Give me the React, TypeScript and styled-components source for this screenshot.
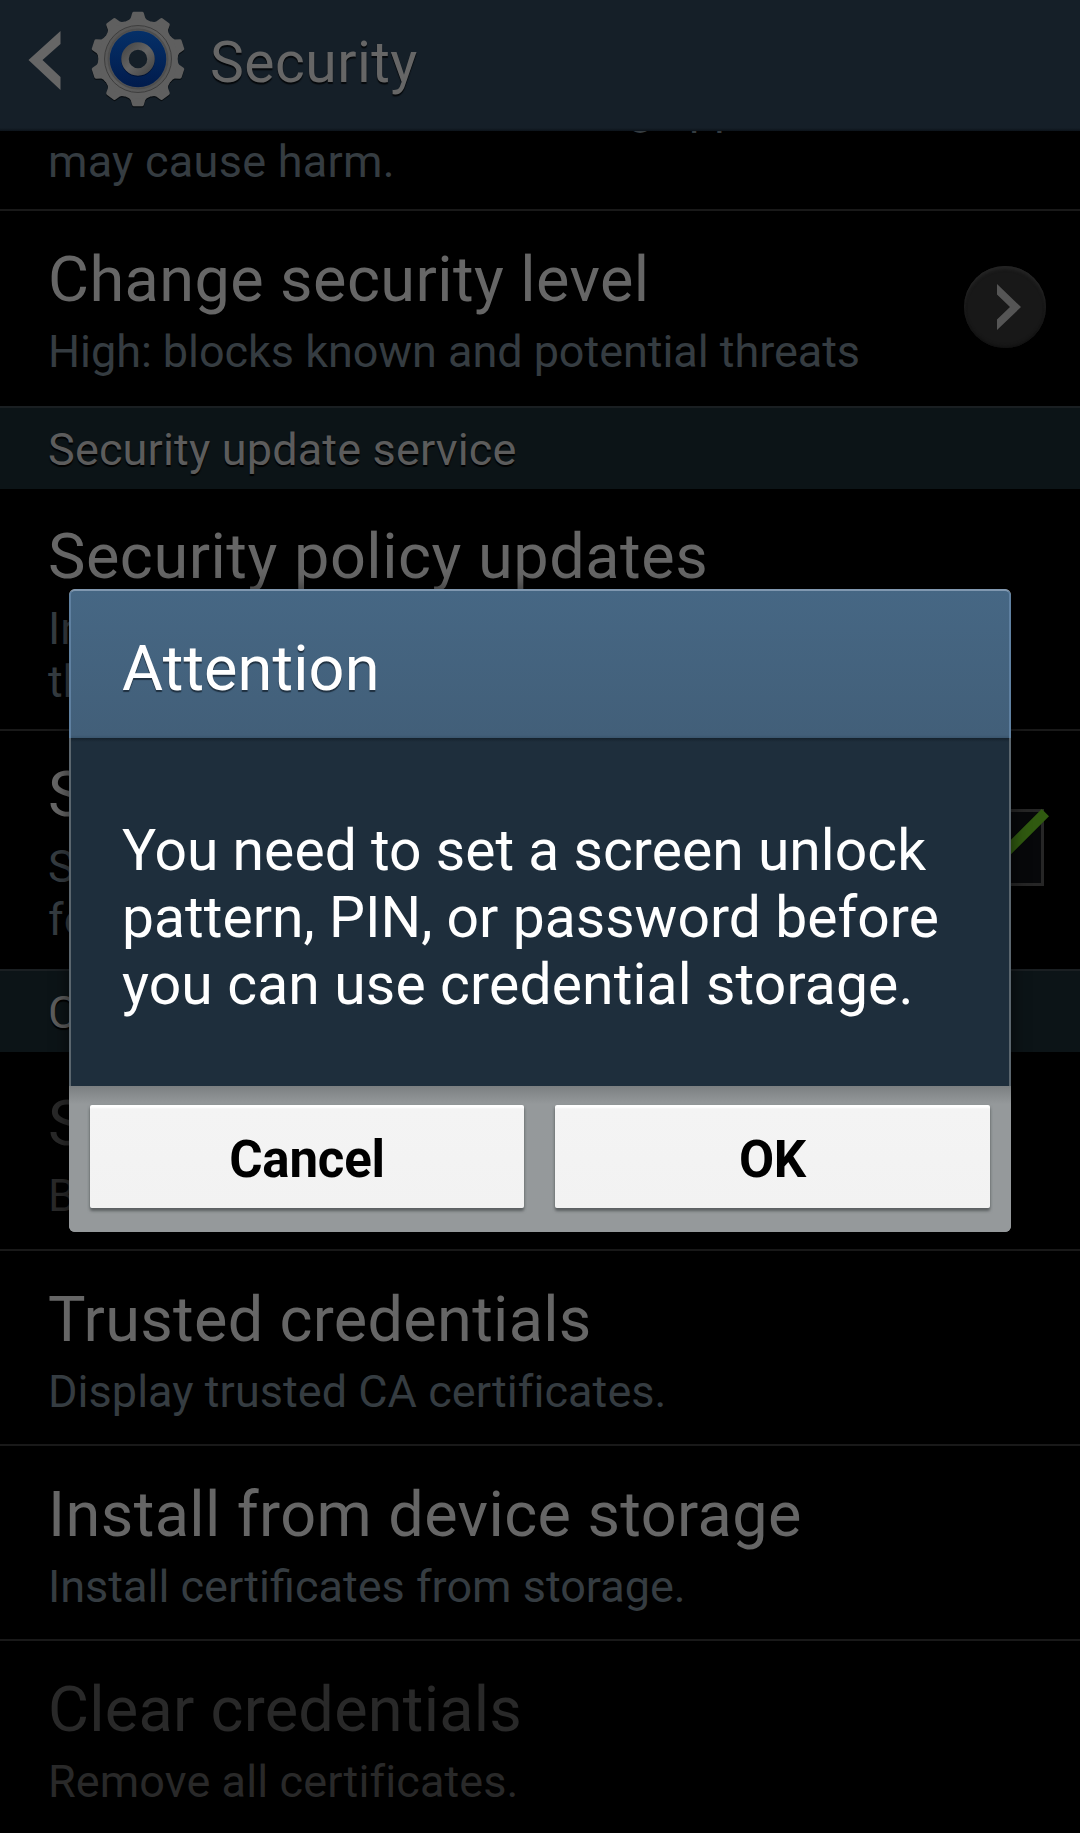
import React from "react";
import styled, { createGlobalStyle } from "styled-components";

const Global = createGlobalStyle`
  body { margin: 0; background: #000; font-family: Roboto, "Noto Sans", sans-serif; }
`;

const Screen = styled.div`
  position: relative;
  display: flex;
  flex-direction: column;
  width: 1080px;
  height: 1833px;
  overflow: hidden;
  background: #000;
`;

const ActionBar = styled.header`
  display: flex;
  align-items: center;
  box-sizing: border-box;
  height: 131px;
  flex: none;
  padding: 0 0 13px 28px;
  background: linear-gradient(#151f28 0 128px, #0c131a 131px);
`;

const BackIcon = styled.svg`
  width: 34px;
  height: 64px;
  flex: none;
  margin-top: 3px;
`;

const GearIcon = styled.svg`
  width: 100px;
  height: 100px;
  flex: none;
  margin-left: 26px;
`;

const BarTitle = styled.h1`
  margin: 7px 0 0 22px;
  font-size: 57px;
  font-weight: 400;
  line-height: 66px;
  letter-spacing: 0.45px;
  color: #666;
  text-shadow: 0 2px 1px #05080b;
`;

const List = styled.main`
  display: flex;
  flex-direction: column;
`;

const Clipped = styled.div`
  display: flex;
  flex-direction: column;
  justify-content: flex-end;
  box-sizing: border-box;
  height: 80px;
  overflow: hidden;
  padding: 0 48px 21px;
  border-bottom: 2px solid #191919;
`;

const Row = styled.div<{ $h: number; $top: number; $line?: boolean }>`
  display: flex;
  justify-content: space-between;
  box-sizing: border-box;
  height: ${(p) => p.$h}px;
  padding: ${(p) => p.$top}px 31px 0 48px;
  border-bottom: ${(p) => (p.$line === false ? "0" : "2px solid #191919")};
`;

const Labels = styled.div`
  display: flex;
  flex-direction: column;
  gap: 8px;
`;

const Title = styled.div<{ $off?: boolean; $track?: number }>`
  font-size: 63px;
  line-height: 75px;
  letter-spacing: ${(p) => p.$track ?? 0.4}px;
  white-space: nowrap;
  color: ${(p) => (p.$off ? "#292929" : "#666")};
`;

const Summary = styled.div<{ $off?: boolean; $track?: number }>`
  font-size: 45px;
  line-height: 53px;
  letter-spacing: ${(p) => p.$track ?? 0}px;
  font-variant-ligatures: common-ligatures;
  white-space: pre;
  color: ${(p) => (p.$off ? "#292929" : "#353c41")};
`;

const Section = styled.div`
  box-sizing: border-box;
  height: 83px;
  padding: 15px 48px 0;
  font-size: 45px;
  line-height: 53px;
  letter-spacing: 0.16px;
  color: #5c5c5c;
  background: #0c1417;
  border-top: 2px solid #1a1f22;
  text-shadow: 0 2px 1px #000;
`;

const Disc = styled.div`
  display: flex;
  align-items: center;
  justify-content: center;
  box-sizing: border-box;
  width: 82px;
  height: 82px;
  margin: 24px 3px 0 0;
  padding-left: 8px;
  border-radius: 50%;
  background: #181818;
  box-shadow: inset 0 3px 3px #242424, inset 0 -2px 3px #121212;
`;

const CheckIcon = styled.svg`
  width: 90px;
  height: 90px;
  margin-top: 43px;
`;

const Overlay = styled.div`
  position: absolute;
  inset: 0;
  display: flex;
  align-items: flex-start;
  justify-content: center;
  padding-top: 589px;
`;

const Dialog = styled.section`
  display: flex;
  flex-direction: column;
  width: 942px;
  height: 643px;
  border-radius: 6px;
  overflow: hidden;
  background: #95999b;
  box-shadow: 0 0 18px rgba(0, 0, 0, 0.6);
`;

const DialogHead = styled.div`
  box-sizing: border-box;
  height: 149px;
  padding: 40px 51px 0;
  font-size: 63px;
  line-height: 75px;
  letter-spacing: 0.1px;
  color: #fff;
  background: linear-gradient(#466784, #425f79 144px, #3a556d);
  border: 2px solid #5f80a0;
  border-top-color: #8098b0;
  border-bottom: 0;
  border-radius: 6px 6px 0 0;
  text-shadow: 0 2px 1px #1f3040;
`;

const DialogBody = styled.div`
  box-sizing: border-box;
  height: 348px;
  padding: 79px 51px 0;
  color: #fff;
  background: linear-gradient(#15222d, #1e2e3c 4px);
  border: solid #5b666e;
  border-width: 0 2px;
`;

const Line = styled.div<{ $track?: number }>`
  font-size: 57px;
  line-height: 67px;
  letter-spacing: ${(p) => p.$track ?? 0.03}px;
  white-space: nowrap;
`;

const Buttons = styled.div`
  display: grid;
  grid-template-columns: 434px 435px;
  gap: 31px;
  flex: 1;
  padding: 19px 21px 24px;
  background: linear-gradient(#7b7f81, #95999b 18px);
`;

const Button = styled.button`
  margin: 0;
  padding: 6px 0 0;
  border: 0;
  border-radius: 2px;
  font: 700 51px/60px Roboto, "Noto Sans", sans-serif;
  letter-spacing: -0.2px;
  color: #000;
  background: linear-gradient(#fff 0 2px, #f4f4f4 4px, #f2f2f2);
  box-shadow: 0 3px 3px #5c6062, 0 1px 3px #7c8082;
`;

function Gear() {
  const teeth = Array.from({ length: 10 }, (_, i) => i * 36);
  return (
    <GearIcon viewBox="-50 -50 100 100">
      <defs>
        <linearGradient id="blue" x1="0" y1="0" x2="0" y2="1">
          <stop offset="0" stopColor="#053068" />
          <stop offset="1" stopColor="#011b4c" />
        </linearGradient>
        <linearGradient id="ring" x1="0" y1="0" x2="1" y2="1">
          <stop offset="0" stopColor="#484848" />
          <stop offset="0.5" stopColor="#646464" />
          <stop offset="1" stopColor="#484848" />
        </linearGradient>
        <linearGradient id="body" x1="0" y1="0" x2="1" y2="1">
          <stop offset="0" stopColor="#525252" />
          <stop offset="0.5" stopColor="#606060" />
          <stop offset="1" stopColor="#545454" />
        </linearGradient>
        <path
          id="tooth"
          d="M-13-36L-11.500-38Q-8.200-39.200-7.300-41L-5.800-46Q-5.300-47.200-4.200-47.200H4.200Q5.300-47.200 5.800-46L7.300-41Q8.200-39.200 11.500-38L13-36Z"
        />
      </defs>
      <g fill="#090e12" transform="translate(0 1.200)">
        {teeth.map((a) => (
          <use key={a} href="#tooth" transform={`rotate(${a})`} />
        ))}
      </g>
      <g fill="#5f5f5f">
        {teeth.map((a) => (
          <use key={a} href="#tooth" transform={`rotate(${a})`} />
        ))}
      </g>
      <circle r="39.600" fill="#5f5f5f" />
      <circle r="33.500" fill="url(#body)" stroke="#3e3e3e" strokeWidth="1" />
      <circle r="29.500" fill="none" stroke="#4e4e4e" strokeWidth="2" />
      <circle r="28.300" fill="url(#blue)" />
      <circle r="13" cy="1" fill="none" stroke="#011233" strokeWidth="7.500" />
      <circle r="13" fill="#151f28" stroke="url(#ring)" strokeWidth="7.500" />
    </GearIcon>
  );
}

type SettingRowProps = {
  title: string;
  summary: string;
  h: number;
  top?: number;
  off?: boolean;
  line?: boolean;
  track?: number;
  summaryTrack?: number;
  children?: React.ReactNode;
};

function SettingRow({ title, summary, h, top = 31, off, line, track, summaryTrack, children }: SettingRowProps) {
  return (
    <Row $h={h} $top={top} $line={line}>
      <Labels>
        <Title $off={off} $track={track}>{title}</Title>
        <Summary $off={off} $track={summaryTrack}>{summary}</Summary>
      </Labels>
      {children}
    </Row>
  );
}

export default function App() {
  return (
    <Screen>
      <Global />
      <ActionBar>
        <BackIcon viewBox="0 0 34 64">
          <path d="M32.500 2V15L14.500 31L32.500 48V61L.500 31Z" fill="#666" />
        </BackIcon>
        <Gear />
        <BarTitle>Security</BarTitle>
      </ActionBar>
      <List>
        <Clipped>
          <Summary>Block or warn before installing apps that</Summary>
          <Summary $track={0.25}>may cause harm.</Summary>
        </Clipped>
        <SettingRow
          title="Change security level"
          summary="High: blocks known and potential threats"
          h={195}
          line={false}
          track={0.42}
          summaryTrack={-0.05}
        >
          <Disc>
            <svg width="26" height="48" viewBox="0 0 26 48">
              <path d="M1 1L25 24L1 47V36.500L14 24L1 11.500Z" fill="#555" />
            </svg>
          </Disc>
        </SettingRow>
        <Section>Security update service</Section>
        <SettingRow
          title="Security policy updates"
          summary={"Increase security by automatically updating\nthe security policy."}
          h={242}
          top={30}
          track={0.53}
        />
        <SettingRow
          title="Send security reports"
          summary={"Send security reports to Samsung via Wi-Fi\nfor threat analysis."}
          h={238}
          top={26}
          line={false}
        >
          <CheckIcon viewBox="0 0 90 90">
            <rect x="9.500" y="10.500" width="74" height="74" fill="#07080a" stroke="#262626" strokeWidth="3" />
            <path d="M20 36L41 58L86.400 12.600" fill="none" stroke="#305a10" strokeWidth="10.300" />
          </CheckIcon>
        </SettingRow>
        <Section>Credential storage</Section>
        <SettingRow title="Storage type" summary="Back up to hardware." h={199} top={34} off />
        <SettingRow
          title="Trusted credentials"
          summary="Display trusted CA certificates."
          h={195}
          track={0.3}
          summaryTrack={0.04}
        />
        <SettingRow title="Install from device storage" summary="Install certificates from storage." h={195} />
        <SettingRow
          title="Clear credentials"
          summary="Remove all certificates."
          h={195}
          off
          track={0.25}
          summaryTrack={0.1}
        />
      </List>
      <Overlay>
        <Dialog>
          <DialogHead>Attention</DialogHead>
          <DialogBody>
            <Line>You need to set a screen unlock</Line>
            <Line>pattern, PIN, or password before</Line>
            <Line $track={0.15}>you can use credential storage.</Line>
          </DialogBody>
          <Buttons>
            <Button>Cancel</Button>
            <Button>OK</Button>
          </Buttons>
        </Dialog>
      </Overlay>
    </Screen>
  );
}
